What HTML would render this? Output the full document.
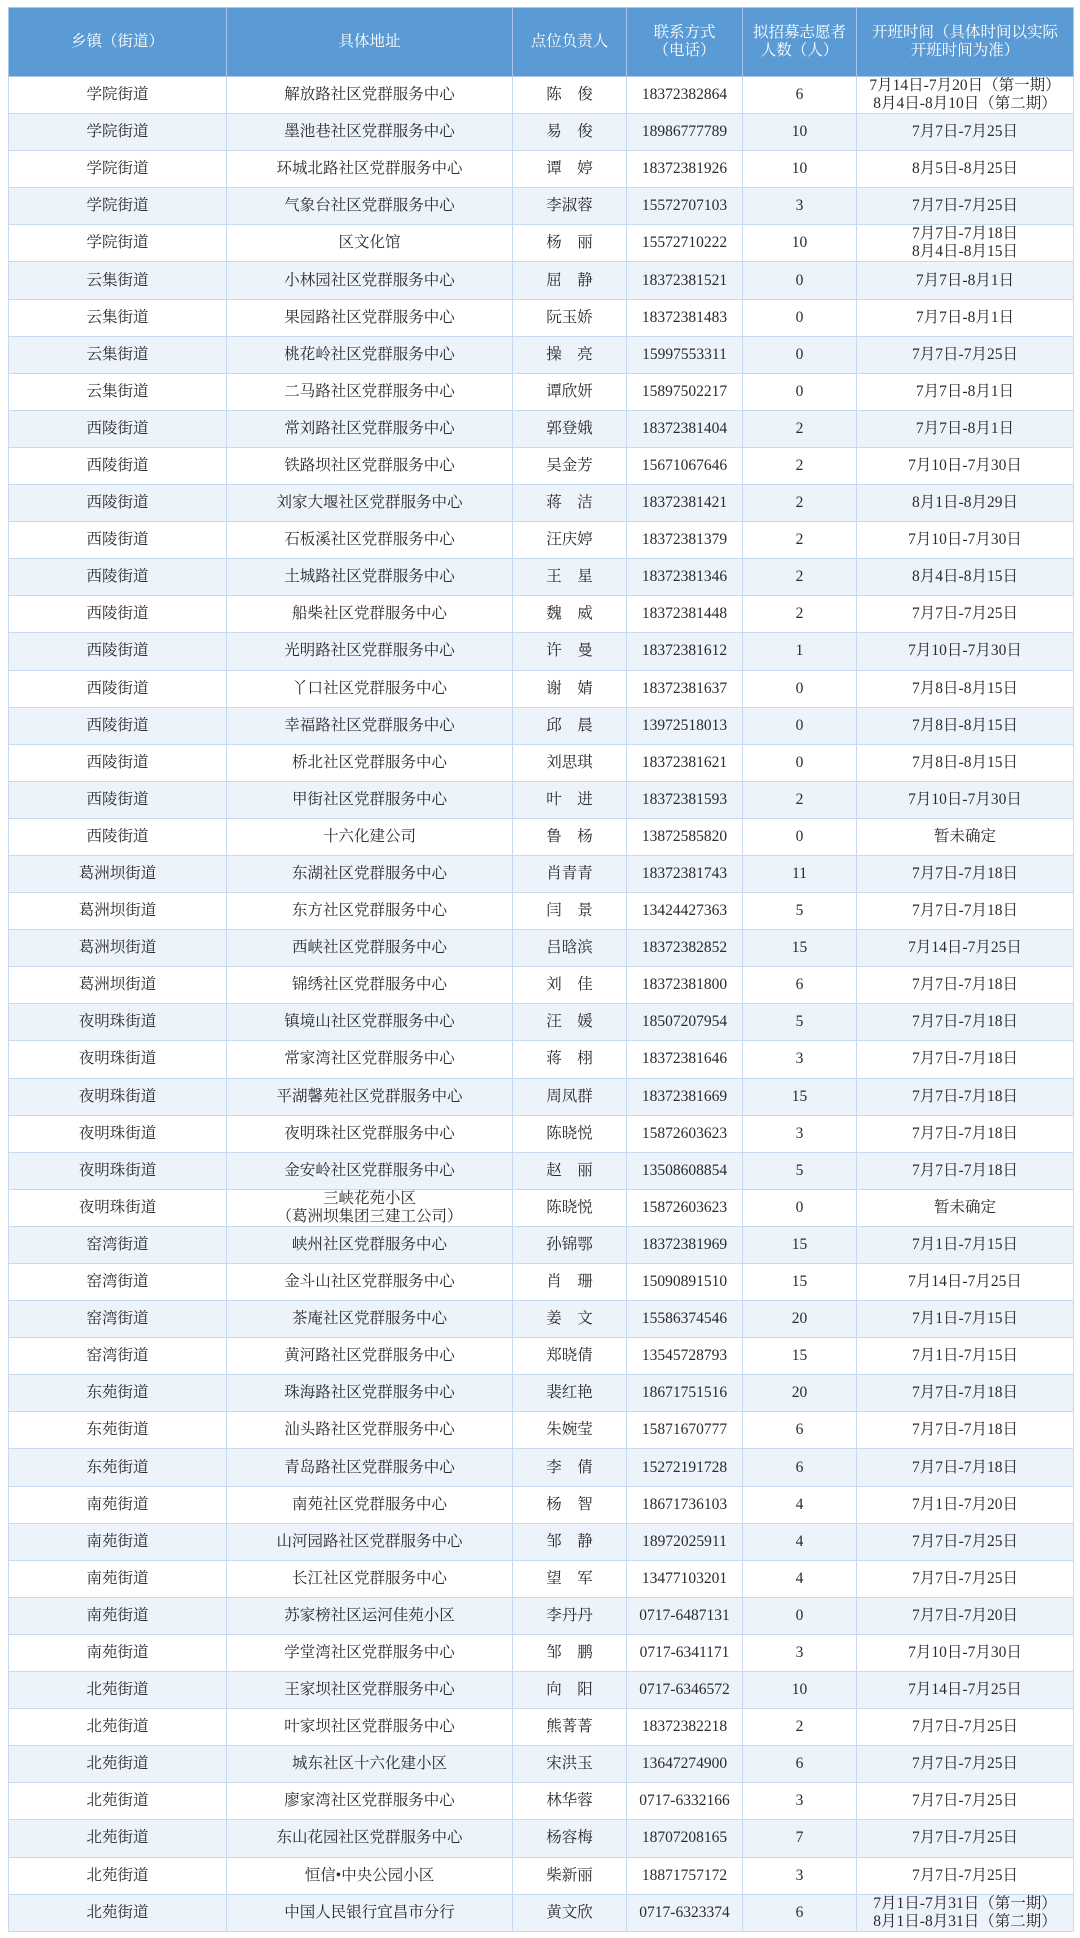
<!DOCTYPE html>
<html><head><meta charset="utf-8"><style>
html,body{margin:0;padding:0;background:#fff;width:1080px;height:1938px;overflow:hidden}
table{position:absolute;left:8px;top:7px;width:1065px;border-collapse:collapse;table-layout:fixed;font-family:"Liberation Serif","Noto Serif CJK SC",serif;font-size:15.5px;color:#2a2a2a}
td,th{border:1.5px solid #c6d9f0;text-align:center;vertical-align:middle;padding:0;line-height:18px;white-space:nowrap;overflow:hidden}
th{background:#5b9bd5;color:#fff;font-weight:normal;height:68px;border-color:#a9c6e8}
tr.r td{height:36.1px}
tbody tr:nth-child(even) td{background:#edf3fb}
</style></head><body>
<table>
<colgroup><col style="width:218px"><col style="width:286px"><col style="width:114px"><col style="width:116px"><col style="width:114px"><col style="width:217px"></colgroup>
<thead><tr><th>乡镇（街道）</th><th>具体地址</th><th>点位负责人</th><th>联系方式<br>（电话）</th><th>拟招募志愿者<br>人数（人）</th><th>开班时间（具体时间以实际<br>开班时间为准）</th></tr></thead>
<tbody>
<tr class="r"><td>学院街道</td><td>解放路社区党群服务中心</td><td>陈&emsp;俊</td><td>18372382864</td><td>6</td><td>7月14日-7月20日（第一期）<br>8月4日-8月10日（第二期）</td></tr>
<tr class="r"><td>学院街道</td><td>墨池巷社区党群服务中心</td><td>易&emsp;俊</td><td>18986777789</td><td>10</td><td>7月7日-7月25日</td></tr>
<tr class="r"><td>学院街道</td><td>环城北路社区党群服务中心</td><td>谭&emsp;婷</td><td>18372381926</td><td>10</td><td>8月5日-8月25日</td></tr>
<tr class="r"><td>学院街道</td><td>气象台社区党群服务中心</td><td>李淑蓉</td><td>15572707103</td><td>3</td><td>7月7日-7月25日</td></tr>
<tr class="r"><td>学院街道</td><td>区文化馆</td><td>杨&emsp;丽</td><td>15572710222</td><td>10</td><td>7月7日-7月18日<br>8月4日-8月15日</td></tr>
<tr class="r"><td>云集街道</td><td>小林园社区党群服务中心</td><td>屈&emsp;静</td><td>18372381521</td><td>0</td><td>7月7日-8月1日</td></tr>
<tr class="r"><td>云集街道</td><td>果园路社区党群服务中心</td><td>阮玉娇</td><td>18372381483</td><td>0</td><td>7月7日-8月1日</td></tr>
<tr class="r"><td>云集街道</td><td>桃花岭社区党群服务中心</td><td>操&emsp;亮</td><td>15997553311</td><td>0</td><td>7月7日-7月25日</td></tr>
<tr class="r"><td>云集街道</td><td>二马路社区党群服务中心</td><td>谭欣妍</td><td>15897502217</td><td>0</td><td>7月7日-8月1日</td></tr>
<tr class="r"><td>西陵街道</td><td>常刘路社区党群服务中心</td><td>郭登娥</td><td>18372381404</td><td>2</td><td>7月7日-8月1日</td></tr>
<tr class="r"><td>西陵街道</td><td>铁路坝社区党群服务中心</td><td>吴金芳</td><td>15671067646</td><td>2</td><td>7月10日-7月30日</td></tr>
<tr class="r"><td>西陵街道</td><td>刘家大堰社区党群服务中心</td><td>蒋&emsp;洁</td><td>18372381421</td><td>2</td><td>8月1日-8月29日</td></tr>
<tr class="r"><td>西陵街道</td><td>石板溪社区党群服务中心</td><td>汪庆婷</td><td>18372381379</td><td>2</td><td>7月10日-7月30日</td></tr>
<tr class="r"><td>西陵街道</td><td>土城路社区党群服务中心</td><td>王&emsp;星</td><td>18372381346</td><td>2</td><td>8月4日-8月15日</td></tr>
<tr class="r"><td>西陵街道</td><td>船柴社区党群服务中心</td><td>魏&emsp;威</td><td>18372381448</td><td>2</td><td>7月7日-7月25日</td></tr>
<tr class="r"><td>西陵街道</td><td>光明路社区党群服务中心</td><td>许&emsp;曼</td><td>18372381612</td><td>1</td><td>7月10日-7月30日</td></tr>
<tr class="r"><td>西陵街道</td><td>丫口社区党群服务中心</td><td>谢&emsp;婧</td><td>18372381637</td><td>0</td><td>7月8日-8月15日</td></tr>
<tr class="r"><td>西陵街道</td><td>幸福路社区党群服务中心</td><td>邱&emsp;晨</td><td>13972518013</td><td>0</td><td>7月8日-8月15日</td></tr>
<tr class="r"><td>西陵街道</td><td>桥北社区党群服务中心</td><td>刘思琪</td><td>18372381621</td><td>0</td><td>7月8日-8月15日</td></tr>
<tr class="r"><td>西陵街道</td><td>甲街社区党群服务中心</td><td>叶&emsp;进</td><td>18372381593</td><td>2</td><td>7月10日-7月30日</td></tr>
<tr class="r"><td>西陵街道</td><td>十六化建公司</td><td>鲁&emsp;杨</td><td>13872585820</td><td>0</td><td>暂未确定</td></tr>
<tr class="r"><td>葛洲坝街道</td><td>东湖社区党群服务中心</td><td>肖青青</td><td>18372381743</td><td>11</td><td>7月7日-7月18日</td></tr>
<tr class="r"><td>葛洲坝街道</td><td>东方社区党群服务中心</td><td>闫&emsp;景</td><td>13424427363</td><td>5</td><td>7月7日-7月18日</td></tr>
<tr class="r"><td>葛洲坝街道</td><td>西峡社区党群服务中心</td><td>吕晗滨</td><td>18372382852</td><td>15</td><td>7月14日-7月25日</td></tr>
<tr class="r"><td>葛洲坝街道</td><td>锦绣社区党群服务中心</td><td>刘&emsp;佳</td><td>18372381800</td><td>6</td><td>7月7日-7月18日</td></tr>
<tr class="r"><td>夜明珠街道</td><td>镇境山社区党群服务中心</td><td>汪&emsp;媛</td><td>18507207954</td><td>5</td><td>7月7日-7月18日</td></tr>
<tr class="r"><td>夜明珠街道</td><td>常家湾社区党群服务中心</td><td>蒋&emsp;栩</td><td>18372381646</td><td>3</td><td>7月7日-7月18日</td></tr>
<tr class="r"><td>夜明珠街道</td><td>平湖馨苑社区党群服务中心</td><td>周凤群</td><td>18372381669</td><td>15</td><td>7月7日-7月18日</td></tr>
<tr class="r"><td>夜明珠街道</td><td>夜明珠社区党群服务中心</td><td>陈晓悦</td><td>15872603623</td><td>3</td><td>7月7日-7月18日</td></tr>
<tr class="r"><td>夜明珠街道</td><td>金安岭社区党群服务中心</td><td>赵&emsp;丽</td><td>13508608854</td><td>5</td><td>7月7日-7月18日</td></tr>
<tr class="r"><td>夜明珠街道</td><td>三峡花苑小区<br>（葛洲坝集团三建工公司）</td><td>陈晓悦</td><td>15872603623</td><td>0</td><td>暂未确定</td></tr>
<tr class="r"><td>窑湾街道</td><td>峡州社区党群服务中心</td><td>孙锦鄂</td><td>18372381969</td><td>15</td><td>7月1日-7月15日</td></tr>
<tr class="r"><td>窑湾街道</td><td>金斗山社区党群服务中心</td><td>肖&emsp;珊</td><td>15090891510</td><td>15</td><td>7月14日-7月25日</td></tr>
<tr class="r"><td>窑湾街道</td><td>茶庵社区党群服务中心</td><td>姜&emsp;文</td><td>15586374546</td><td>20</td><td>7月1日-7月15日</td></tr>
<tr class="r"><td>窑湾街道</td><td>黄河路社区党群服务中心</td><td>郑晓倩</td><td>13545728793</td><td>15</td><td>7月1日-7月15日</td></tr>
<tr class="r"><td>东苑街道</td><td>珠海路社区党群服务中心</td><td>裴红艳</td><td>18671751516</td><td>20</td><td>7月7日-7月18日</td></tr>
<tr class="r"><td>东苑街道</td><td>汕头路社区党群服务中心</td><td>朱婉莹</td><td>15871670777</td><td>6</td><td>7月7日-7月18日</td></tr>
<tr class="r"><td>东苑街道</td><td>青岛路社区党群服务中心</td><td>李&emsp;倩</td><td>15272191728</td><td>6</td><td>7月7日-7月18日</td></tr>
<tr class="r"><td>南苑街道</td><td>南苑社区党群服务中心</td><td>杨&emsp;智</td><td>18671736103</td><td>4</td><td>7月1日-7月20日</td></tr>
<tr class="r"><td>南苑街道</td><td>山河园路社区党群服务中心</td><td>邹&emsp;静</td><td>18972025911</td><td>4</td><td>7月7日-7月25日</td></tr>
<tr class="r"><td>南苑街道</td><td>长江社区党群服务中心</td><td>望&emsp;军</td><td>13477103201</td><td>4</td><td>7月7日-7月25日</td></tr>
<tr class="r"><td>南苑街道</td><td>苏家榜社区运河佳苑小区</td><td>李丹丹</td><td>0717-6487131</td><td>0</td><td>7月7日-7月20日</td></tr>
<tr class="r"><td>南苑街道</td><td>学堂湾社区党群服务中心</td><td>邹&emsp;鹏</td><td>0717-6341171</td><td>3</td><td>7月10日-7月30日</td></tr>
<tr class="r"><td>北苑街道</td><td>王家坝社区党群服务中心</td><td>向&emsp;阳</td><td>0717-6346572</td><td>10</td><td>7月14日-7月25日</td></tr>
<tr class="r"><td>北苑街道</td><td>叶家坝社区党群服务中心</td><td>熊菁菁</td><td>18372382218</td><td>2</td><td>7月7日-7月25日</td></tr>
<tr class="r"><td>北苑街道</td><td>城东社区十六化建小区</td><td>宋洪玉</td><td>13647274900</td><td>6</td><td>7月7日-7月25日</td></tr>
<tr class="r"><td>北苑街道</td><td>廖家湾社区党群服务中心</td><td>林华蓉</td><td>0717-6332166</td><td>3</td><td>7月7日-7月25日</td></tr>
<tr class="r"><td>北苑街道</td><td>东山花园社区党群服务中心</td><td>杨容梅</td><td>18707208165</td><td>7</td><td>7月7日-7月25日</td></tr>
<tr class="r"><td>北苑街道</td><td>恒信•中央公园小区</td><td>柴新丽</td><td>18871757172</td><td>3</td><td>7月7日-7月25日</td></tr>
<tr class="r"><td>北苑街道</td><td>中国人民银行宜昌市分行</td><td>黄文欣</td><td>0717-6323374</td><td>6</td><td>7月1日-7月31日（第一期）<br>8月1日-8月31日（第二期）</td></tr>
</tbody></table>
</body></html>
